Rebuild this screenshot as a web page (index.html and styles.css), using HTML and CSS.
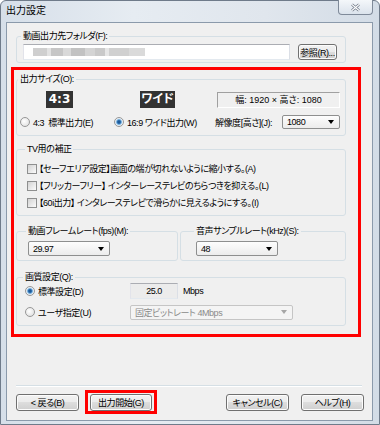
FILE: index.html
```html
<!DOCTYPE html>
<html lang="ja">
<head>
	<meta charset="utf-8" />
	<title>出力設定</title>
	<link rel="stylesheet" href="styles.css">
</head>
<body>
<div class="window">
	<div class="titlebar">
		<span class="title">出力設定</span>
		<span class="close">
			<svg width="11" height="9" viewBox="0 0 11 9"><path d="M2 1.5 L9 7.5 M9 1.5 L2 7.5" stroke="#6d7785" stroke-width="2.6" /><path d="M2 1.5 L9 7.5 M9 1.5 L2 7.5" stroke="#fff" stroke-width="1.1" /></svg>
		</span>
	</div>
	<div class="client">
		<fieldset class="group folder">
			<legend>動画出力先フォルダ(F):</legend>
			<div class="folder-row">
				<div class="textbox path"><span class="blur"></span></div>
				<button class="btn browse">参照(R)...</button>
			</div>
		</fieldset>

		<div class="mark">
			<fieldset class="group size">
				<legend>出力サイズ(O):</legend>
				<div class="size-grid">
					<span class="badge">4:3</span>
					<span class="badge wide">ワイド</span>
					<span class="resbox">幅:&nbsp;1920&nbsp;×&nbsp;高さ:&nbsp;1080</span>
					<label class="opt"><span class="radio"></span>4:3&nbsp; 標準出力(E)</label>
					<label class="opt"><span class="radio on"></span>16:9 ワイド出力(W)</label>
					<span class="res-row">解像度[高さ](J): <span class="combo res"><span>1080</span><span class="arrow"></span></span></span>
				</div>
			</fieldset>

			<fieldset class="group tv">
				<legend>TV用の補正</legend>
				<label class="check-row"><span class="check"></span>【セーフエリア設定】画面の端が切れないように縮小する。(A)</label>
				<label class="check-row"><span class="check"></span>【フリッカーフリー】 インターレーステレビのちらつきを抑える。(L)</label>
				<label class="check-row"><span class="check"></span>【60i出力】 インタレーステレビで滑らかに見えるようにする。(I)</label>
			</fieldset>

			<div class="rates">
				<fieldset class="group fps">
					<legend>動画フレームレート(fps)(M):</legend>
					<span class="combo rate"><span>29.97</span><span class="arrow"></span></span>
				</fieldset>
				<fieldset class="group khz">
					<legend>音声サンプルレート(kHz)(S):</legend>
					<span class="combo rate"><span>48</span><span class="arrow"></span></span>
				</fieldset>
			</div>

			<fieldset class="group quality">
				<legend>画質設定(Q):</legend>
				<div class="q-row first">
					<label class="opt"><span class="radio on"></span>標準設定(D)</label>
					<span class="num">25.0</span>
					<span class="unit">Mbps</span>
				</div>
				<div class="q-row">
					<label class="opt"><span class="radio"></span>ユーザ指定(U)</label>
					<span class="combo fixed"><span>固定ビットレート 4Mbps</span><span class="arrow"></span></span>
				</div>
			</fieldset>
		</div>

		<div class="footer">
			<div class="sep"></div>
			<div class="buttons">
				<button class="btn dlg">&lt; 戻る(B)</button>
				<span class="start-mark"><button class="btn dlg start">出力開始(G)</button></span>
				<button class="btn dlg cancel">キャンセル(C)</button>
				<button class="btn dlg help">ヘルプ(H)</button>
			</div>
		</div>
	</div>
</div>
</body>
</html>
```

FILE: styles.css
```css
*{
margin:0;
padding:0;}
body{
background:#fff;
font-family:"Liberation Sans","Noto Sans CJK JP",sans-serif;
font-size:9px;
font-feature-settings:"palt";
letter-spacing:-0.45px;
color:#000;
}
.window{
width:380px;
height:425px;
box-sizing:border-box;
border:1px solid #6f7b8a;
border-radius:6px 6px 0 0;
padding:0 6px 3px 5px;
background:linear-gradient(to right,#d6dfe9,#e6ecf2 35%,#e0e6ed 70%,#d3dce6);
display:flex;
flex-direction:column;
}
.titlebar{
height:21px;
display:flex;
justify-content:space-between;
align-items:flex-start;
}
.title{
font-size:10px;
line-height:18px;
margin-top:1px;
letter-spacing:0;
}
.close{
width:35px;
height:15px;
margin-top:-1px;
box-sizing:border-box;
border:1px solid #7f8a99;
border-top:0;
border-radius:0 0 4px 4px;
background:linear-gradient(#f4f7fa,#dbe3ec);
display:flex;
align-items:center;
justify-content:center;
}
.client{
height:399px;
box-sizing:border-box;
border:1px solid #8b9aab;
background:#f0f0f0;
display:flex;
flex-direction:column;
}

/* group boxes */
.group{
border:1px solid #d5dfe5;
border-radius:3px;
min-width:0;
padding:0 4px;
}
.group legend{
padding:0 2px;
margin-left:-2px;
line-height:14px;
}
.folder{
margin:6px 26px 0 9px;
padding:1px 0 2px 6px;
}
.folder-row{
display:flex;
align-items:center;
}
.textbox{
box-sizing:border-box;
height:16px;
border:1px solid;
border-color:#abadb3 #dbdfe6 #e3e9ef #e2e3ea;
background:#fff;
}
.path{
width:267px;
padding:3px 0 0 9px;
}
.blur{
display:block;
width:112px;
height:8px;
background:linear-gradient(to right,#cfcfcf 0 14px,#e2e2e2 14px 18px,#c6c6c6 18px 30px,#d9d9d9 30px 38px,#c2c2c2 38px 52px,#d4d4d4 52px 62px,#c9c9c9 62px 72px,#e6e6e6 72px 76px,#d0d0d0 76px 96px,#dadada 96px 112px);
filter:blur(0.7px);
}
.btn{
box-sizing:border-box;
border:1px solid #707070;
border-radius:3px;
background:linear-gradient(#f2f2f2 0,#ebebeb 50%,#dddddd 50%,#cfcfcf 100%);
box-shadow:inset 0 0 0 1px #fcfcfc;
font:inherit;
letter-spacing:inherit;
color:#000;
padding:0;
white-space:nowrap;
}
.browse{
margin-left:8px;
width:39px;
height:16px;
}

/* red annotation frame */
.mark{
margin:4px 0 0 4px;
width:350px;
box-sizing:border-box;
border:3px solid #f00;
padding:2px 12px 8px 2px;
}
.size{
padding:5px 5px 5px 3px;
}
.size-grid{
display:grid;
grid-template-columns:94px 101px 1fr;
grid-template-rows:17px 16px;
row-gap:6px;
align-items:center;
}
.badge{
justify-self:start;
margin-left:26px;
width:27px;
height:17px;
background:#333;
color:#fff;
font-family:"DejaVu Sans","Noto Sans CJK JP",sans-serif;
font-weight:bold;
font-size:12px;
letter-spacing:0;
line-height:17px;
text-align:center;
}
.badge.wide{
width:35px;
}
.resbox{
margin-left:2px;
height:16px;
box-sizing:border-box;
border:1px solid;
border-color:#a0a0a0 #fff #fff #a0a0a0;
text-align:center;
line-height:14px;
letter-spacing:0;
}
.opt{
display:flex;
align-items:center;
gap:3px;
white-space:nowrap;
}
.radio{
width:10px;
height:10px;
box-sizing:border-box;
border-radius:50%;
border:1px solid #979797;
background:radial-gradient(circle at 40% 40%,#fff,#dadada);
}
.radio.on{
background:radial-gradient(circle,#1d5a9a 0 1.3px,#5fa2d8 2.3px,#e4edf5 3.3px,#f4f4f4);
}
.res-row{
display:flex;
align-items:center;
justify-content:space-between;
}
.combo{
box-sizing:border-box;
height:14px;
border:1px solid #8e8f8f;
border-radius:2px;
background:linear-gradient(#fdfdfd,#ececec);
display:flex;
align-items:center;
justify-content:space-between;
padding:0 5px 0 4px;
}
.res{
width:58px;
}
.arrow{
width:0;
height:0;
border-left:3.5px solid transparent;
border-right:3.5px solid transparent;
border-top:4px solid #000;
}

.tv{
margin-top:6px;
padding:4px 4px 4px 10px;
}
.check-row{
height:17px;
display:flex;
align-items:center;
gap:2px;
white-space:nowrap;
}
.check{
width:10px;
height:10px;
box-sizing:border-box;
border:1px solid #8e8f8f;
background:linear-gradient(135deg,#d2d2d2,#fbfbfb);
}

.rates{
display:flex;
gap:2px;
margin-top:8px;
}
.rates .group{
flex:1;
padding:3px 4px 4px 11px;
}
.rates .khz{
padding-left:15px;
}
.rate{
width:82px;
height:15px;
}

.quality{
margin-top:9px;
padding:0 4px 5px 8px;
}
.q-row{
display:grid;
grid-template-columns:105px 48px auto;
align-items:center;
height:16px;
margin-top:5px;
}
.q-row.first{
margin-top:-1px;
}
.num{
box-sizing:border-box;
height:16px;
border:1px solid;
border-color:#abadb3 #dbdfe6 #e3e9ef #e2e3ea;
background:#ececec;
text-align:center;
line-height:14px;
}
.unit{
margin-left:5px;
}
.fixed{
grid-column:span 2;
width:163px;
height:15px;
border-color:#c5c5c5;
background:#f4f4f4;
color:#8a8a8a;
}
.fixed .arrow{
border-top-color:#a6a6a6;
}

/* bottom buttons */
.footer{
margin-top:auto;
padding-bottom:6px;
}
.sep{
border-top:1px solid #d5dfe5;
border-bottom:1px solid #fff;
margin:0 10px 3px 9px;
}
.buttons{
display:flex;
align-items:center;
padding:0 8px 0 9px;
}
.dlg{
width:63px;
height:17px;
}
.start-mark{
margin-left:6px;
border:3px solid #f00;
padding:1px 2px 0;
display:flex;
}
.start{
width:62px;
}
.cancel{
margin-left:auto;
}
.help{
margin-left:12px;
}
```
